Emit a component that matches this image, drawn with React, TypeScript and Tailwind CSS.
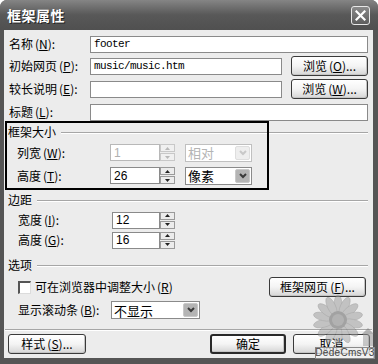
import React from "react";

const CJK = "font-['Noto_Sans_CJK_SC',sans-serif]";

const Acc = ({ k }: { k: string }) => (
  <span className="ml-[2px]">
    (<span className="underline underline-offset-1">{k}</span>)
  </span>
);

function Label({ children, className = "" }: { children: React.ReactNode; className?: string }) {
  return <div className={`text-[12px] leading-none text-black whitespace-nowrap ${CJK} ${className}`}>{children}</div>;
}

function TextBox({
  text = "",
  className = "",
  kind = "mono",
  disabled = false,
}: {
  text?: string;
  className?: string;
  kind?: "mono" | "num";
  disabled?: boolean;
}) {
  return (
    <div
      className={`h-[17px] border ${disabled ? "border-[#b8b8b8]" : "border-[#8a8a8a]"} bg-white flex items-center px-[3px] overflow-hidden ${className}`}
    >
      <span
        className={
          kind === "mono"
            ? "font-['Liberation_Mono',monospace] text-[11px] tracking-[-0.6px] text-black"
            : `font-['Liberation_Sans',sans-serif] text-[12px] ${disabled ? "text-[#b0b0b0]" : "text-black"}`
        }
      >
        {text}
      </span>
    </div>
  );
}

function Arrow({ up, disabled }: { up: boolean; disabled?: boolean }) {
  return (
    <div
      className={`h-[8px] w-[15px] border ${disabled ? "border-[#c8c8c8] bg-[#f0f0f0]" : "border-[#9a9a9a] bg-[#ececec]"} flex items-center justify-center`}
    >
      <svg width="5" height="3" viewBox="0 0 5 3">
        <path d={up ? "M2.5 0 L5 3 L0 3Z" : "M0 0 L5 0 L2.5 3Z"} fill={disabled ? "#b8b8b8" : "#222"} />
      </svg>
    </div>
  );
}

function Spinner({ disabled }: { disabled?: boolean }) {
  return (
    <div className="flex flex-col gap-[1px] h-[17px]">
      <Arrow up disabled={disabled} />
      <Arrow up={false} disabled={disabled} />
    </div>
  );
}

function Select({ text, className = "", disabled = false }: { text: string; className?: string; disabled?: boolean }) {
  return (
    <div
      className={`h-[18px] border ${disabled ? "border-[#c0c0c0]" : "border-[#8a8a8a]"} bg-white flex items-center ${className}`}
    >
      <span className={`flex-1 pl-[2px] text-[13px] leading-none ${CJK} ${disabled ? "text-[#b4b4b4]" : "text-black"}`}>{text}</span>
      <div
        className={`w-[15px] h-[14px] mr-[1px] rounded-[2px] flex items-center justify-center ${disabled ? "bg-[#eeeeee] border border-[#dedede]" : "bg-[#b4b4b4] border border-[#c8c8c8]"}`}
      >
        <svg width="8" height="6" viewBox="0 0 8 6">
          <path d="M1 1 L4 4 L7 1" stroke={disabled ? "#c8c8c8" : "#3a3a3a"} strokeWidth="2" fill="none" />
        </svg>
      </div>
    </div>
  );
}

function Btn({ children, className = "", strong = false }: { children: React.ReactNode; className?: string; strong?: boolean }) {
  return (
    <div
      className={`h-[20px] rounded-[3px] ${strong ? "border-2 border-[#2a2a2a]" : "border border-[#3a3a3a]"} bg-gradient-to-b from-[#ffffff] via-[#f4f4f4] to-[#d6d6d6] shadow-[inset_-1px_-1px_0_#c4c4c4] flex items-center justify-center text-[12px] leading-none text-black whitespace-nowrap ${CJK} ${className}`}
    >
      {children}
    </div>
  );
}

function GroupHead({ title }: { title: string }) {
  return (
    <div className="h-[16px] flex items-center pl-[4px] pr-[5px]">
      <Label>{title}</Label>
      <div className="flex-1 ml-[5px] h-[1px] bg-[#a6a6a6] shadow-[0_1px_0_#ffffff]" />
    </div>
  );
}

function Sunflower() {
  const petals = Array.from({ length: 14 }, (_, i) => (i * 360) / 14);
  return (
    <svg width="64" height="56" viewBox="0 0 64 56">
      <g transform="translate(28 26)" opacity="0.5">
        {petals.map((a) => (
          <ellipse key={a} cx="0" cy="-15" rx="4" ry="10" fill="#9a9a9a" stroke="#6a6a6a" strokeWidth="0.6" transform={`rotate(${a})`} />
        ))}
        <circle r="9" fill="#5a5a5a" />
        <circle r="6" fill="#7a7a7a" />
      </g>
      <g opacity="0.5">
        <path d="M52 40 L58 34 L64 40 Z" fill="#777" />
        <rect x="53" y="40" width="10" height="12" fill="#999" />
      </g>
    </svg>
  );
}

export default function App() {
  return (
    <div className="relative w-[378px] h-[364px] overflow-hidden bg-white">
      <div className="w-[378px] h-[364px] flex flex-col rounded-t-[7px] bg-[#555555] overflow-hidden">
        {/* Title bar */}
        <div className="h-[30px] shrink-0 flex items-center justify-between pl-[7px] pr-[8px] bg-gradient-to-b from-[#858585] via-[#585858] to-[#505050]">
          <span className={`text-[14px] font-bold text-white leading-none tracking-[0.5px] [text-shadow:1px_1px_0_#222] ${CJK}`}>
            框架属性
          </span>
          <div className="w-[19px] h-[19px] mt-[1px] rounded-[3px] border border-[#e8e8e8] bg-gradient-to-b from-[#8a8a8a] to-[#5e5e5e] flex items-center justify-center">
            <svg width="11" height="11" viewBox="0 0 11 11">
              <path d="M1.5 1.5 L9.5 9.5 M9.5 1.5 L1.5 9.5" stroke="#ffffff" strokeWidth="2.2" strokeLinecap="square" />
            </svg>
          </div>
        </div>

        {/* Body */}
        <div className="flex-1 flex pl-[4px] pr-[5px] pb-[6px]">
          <div className="w-[369px] h-[328px] bg-[#ececec] flex flex-col">
            {/* Row 1 */}
            <div className="mt-[4px] h-[20px] flex items-center pl-[5px] pr-[5px]">
              <Label className="w-[81px]">
                名称<Acc k="N" />:
              </Label>
              <TextBox text="footer" className="flex-1" />
            </div>
            {/* Row 2 */}
            <div className="mt-[1px] h-[22px] flex items-center pl-[5px] pr-[5px]">
              <Label className="w-[81px]">
                初始网页<Acc k="P" />:
              </Label>
              <TextBox text="music/music.htm" className="w-[192px]" />
              <Btn className="ml-[9px] w-[77px]">
                浏览<Acc k="O" />...
              </Btn>
            </div>
            {/* Row 3 */}
            <div className="mt-[1px] h-[22px] flex items-center pl-[5px] pr-[5px]">
              <Label className="w-[81px]">
                较长说明<Acc k="E" />:
              </Label>
              <TextBox className="w-[192px]" />
              <Btn className="ml-[9px] w-[77px]">
                浏览<Acc k="W" />...
              </Btn>
            </div>
            {/* Row 4 */}
            <div className="mt-[2px] h-[20px] flex items-center pl-[5px] pr-[5px]">
              <Label className="w-[81px]">
                标题<Acc k="L" />:
              </Label>
              <TextBox className="flex-1" />
            </div>

            {/* 框架大小 */}
            <div className="mt-[2px]">
              <GroupHead title="框架大小" />
            </div>
            <div className="mt-[2px] h-[21px] flex items-center pl-[13px]">
              <Label className="w-[93px]">
                列宽<Acc k="W" />:
              </Label>
              <TextBox text="1" kind="num" disabled className="w-[50px]" />
              <Spinner disabled />
              <Select text="相对" disabled className="ml-[10px] w-[67px]" />
            </div>
            <div className="mt-[2px] h-[21px] flex items-center pl-[13px]">
              <Label className="w-[93px]">
                高度<Acc k="T" />:
              </Label>
              <TextBox text="26" kind="num" className="w-[50px]" />
              <Spinner />
              <Select text="像素" className="ml-[10px] w-[67px]" />
            </div>

            {/* 边距 */}
            <div className="mt-[6px]">
              <GroupHead title="边距" />
            </div>
            <div className="mt-[2px] h-[20px] flex items-center pl-[14px]">
              <Label className="w-[94px]">
                宽度<Acc k="I" />:
              </Label>
              <TextBox text="12" kind="num" className="w-[48px]" />
              <Spinner />
            </div>
            <div className="h-[20px] flex items-center pl-[14px]">
              <Label className="w-[94px]">
                高度<Acc k="G" />:
              </Label>
              <TextBox text="16" kind="num" className="w-[48px]" />
              <Spinner />
            </div>

            {/* 选项 */}
            <div className="mt-[7px]">
              <GroupHead title="选项" />
            </div>
            <div className="mt-[3px] h-[22px] flex items-center pl-[14px] pr-[5px]">
              <div className="w-[13px] h-[13px] bg-white border-t-2 border-l-2 border-t-[#555555] border-l-[#555555] border-b border-r border-b-[#dcdcdc] border-r-[#dcdcdc]" />
              <Label className="ml-[4px]">
                可在浏览器中调整大小<Acc k="R" />
              </Label>
              <div className="flex-1" />
              <Btn className="w-[97px] mr-[2px]">
                框架网页<Acc k="F" />...
              </Btn>
            </div>
            <div className="mt-[2px] h-[20px] flex items-center pl-[14px]">
              <Label className="w-[93px]">
                显示滚动条<Acc k="B" />:
              </Label>
              <Select text="不显示" className="w-[89px]" />
            </div>

            {/* separator */}
            <div className="mt-[9px] mx-[1px] h-[1px] bg-[#a6a6a6] shadow-[0_1px_0_#ffffff]" />

            {/* bottom buttons */}
            <div className="mt-[4px] h-[20px] flex items-center pl-[4px] pr-[3px]">
              <Btn className="w-[78px]">
                样式<Acc k="S" />...
              </Btn>
              <div className="flex-1" />
              <Btn strong className="w-[76px]">
                确定
              </Btn>
              <Btn className="ml-[7px] w-[77px]">取消</Btn>
            </div>
          </div>
        </div>
      </div>

      {/* annotation box */}
      <div className="absolute left-[5px] top-[121px] w-[264px] h-[69px] border-2 border-black pointer-events-none" />

      {/* watermark */}
      <div className="absolute left-[310px] top-[294px] pointer-events-none">
        <Sunflower />
      </div>
      <div className="absolute left-[315px] top-[347px] w-[60px] h-[12px] border border-[#8a8a8a] bg-[#f4f4f4]/70 flex items-center justify-center pointer-events-none">
        <span className="font-['Liberation_Sans',sans-serif] text-[10px] leading-none text-[#444] tracking-[0.3px]">DedeCmsV3</span>
      </div>
    </div>
  );
}
